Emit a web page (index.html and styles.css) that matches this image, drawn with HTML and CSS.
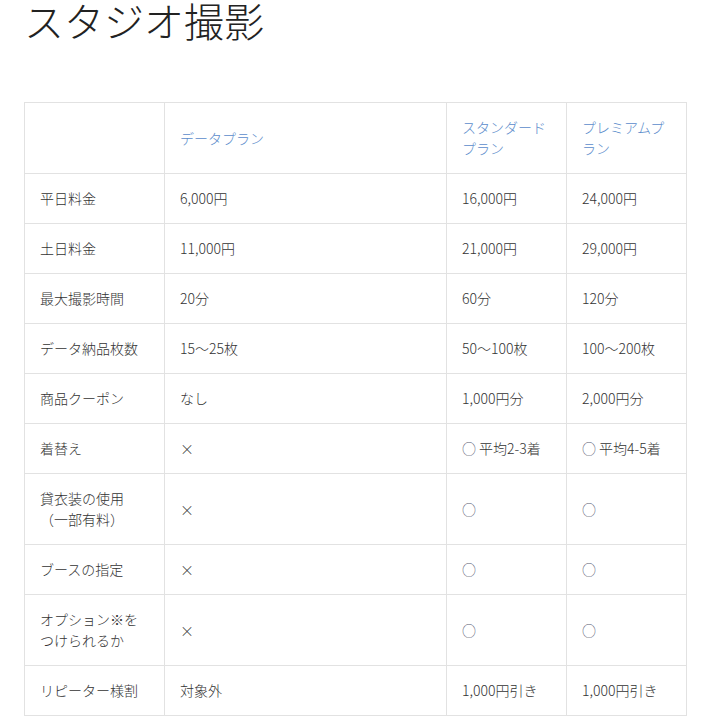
FILE: index.html
```html
<!DOCTYPE html>
<html lang="ja">
<head>
<meta charset="utf-8">
<title>スタジオ撮影</title>
<link rel="stylesheet" href="styles.css">
</head>
<body>
<main class="page">
  <h1 class="title">スタジオ撮影</h1>
  <table class="plans">
    <colgroup>
      <col class="c-label">
      <col class="c-data">
      <col class="c-std">
      <col class="c-pre">
    </colgroup>
    <thead>
      <tr>
        <th></th>
        <th>データプラン</th>
        <th>スタンダードプラン</th>
        <th>プレミアムプラン</th>
      </tr>
    </thead>
    <tbody>
      <tr><td>平日料金</td><td>6,000円</td><td>16,000円</td><td>24,000円</td></tr>
      <tr><td>土日料金</td><td>11,000円</td><td>21,000円</td><td>29,000円</td></tr>
      <tr><td>最大撮影時間</td><td>20分</td><td>60分</td><td>120分</td></tr>
      <tr><td>データ納品枚数</td><td>15〜25枚</td><td>50〜100枚</td><td>100〜200枚</td></tr>
      <tr><td>商品クーポン</td><td>なし</td><td>1,000円分</td><td>2,000円分</td></tr>
      <tr><td>着替え</td><td>×</td><td><span class="ok">○</span> 平均2-3着</td><td><span class="ok">○</span> 平均4-5着</td></tr>
      <tr><td>貸衣装の使用（一部有料）</td><td>×</td><td><span class="ok">○</span></td><td><span class="ok">○</span></td></tr>
      <tr><td>ブースの指定</td><td>×</td><td><span class="ok">○</span></td><td><span class="ok">○</span></td></tr>
      <tr><td>オプション※をつけられるか</td><td>×</td><td><span class="ok">○</span></td><td><span class="ok">○</span></td></tr>
      <tr><td>リピーター様割</td><td>対象外</td><td>1,000円引き</td><td>1,000円引き</td></tr>
    </tbody>
  </table>
</main>
</body>
</html>
```

FILE: styles.css
```css
html, body {
  margin: 0;
  padding: 0;
  background: #fff;
}

body {
  font-family: "Noto Sans CJK JP", "Noto Sans", sans-serif;
  color: #333;
  font-weight: 300;
}

.page {
  padding: 0 24px;
}

.title {
  margin: 0 0 62px;
  font-size: 40px;
  line-height: 40px;
  font-weight: 300;
  color: #222;
}

.plans {
  width: 663px;
  border-collapse: collapse;
  table-layout: fixed;
  font-size: 14px;
  line-height: 21px;
}

.c-label { width: 140px; }
.c-data { width: 282px; }
.c-std { width: 120px; }
.c-pre { width: 120px; }

.plans th,
.plans td {
  border: 1px solid #e2e2e2;
  padding: 14px 15px;
  text-align: left;
  vertical-align: middle;
  font-weight: 300;
}

.plans th {
  color: #5b8ccb;
}

.plans td {
  color: #333;
}

.ok {
  color: #555a70;
}
```
